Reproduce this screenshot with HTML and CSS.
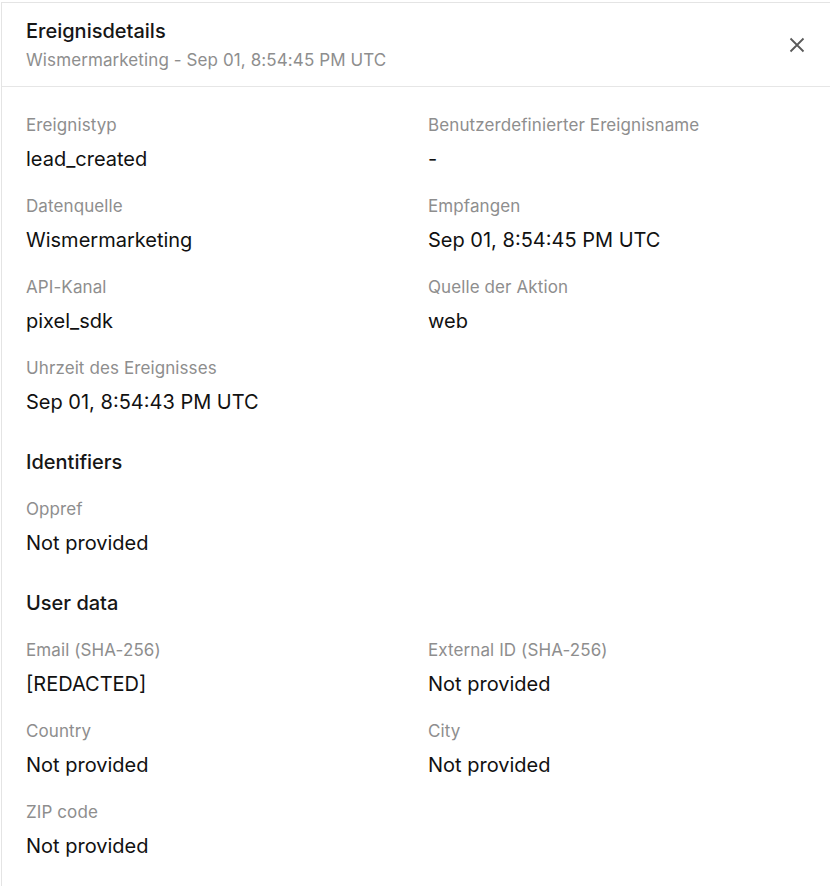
FILE: index.html
```html
<!DOCTYPE html>
<html lang="de">
<head>
<meta charset="utf-8">
<title>Ereignisdetails</title>
<link rel="stylesheet" href="styles.css">
</head>
<body>
<div class="page">
  <div class="backdrop"></div>
  <aside class="panel">
    <header class="panel-header">
      <div class="titles">
        <h1 class="title">Ereignisdetails</h1>
        <div class="subtitle">Wismermarketing - Sep 01, 8:54:45 PM UTC</div>
      </div>
      <button class="close" aria-label="Schließen">
        <svg width="16" height="16" viewBox="0 0 16 16"><path d="M1.5 1.5 L14.5 14.5 M14.5 1.5 L1.5 14.5" stroke="#5a5a5a" stroke-width="1.8" fill="none"/></svg>
      </button>
    </header>
    <div class="panel-body">
      <div class="grid">
        <div class="field"><div class="label">Ereignistyp</div><div class="value">lead_created</div></div>
        <div class="field"><div class="label">Benutzerdefinierter Ereignisname</div><div class="value">-</div></div>
        <div class="field"><div class="label">Datenquelle</div><div class="value">Wismermarketing</div></div>
        <div class="field"><div class="label">Empfangen</div><div class="value">Sep 01, 8:54:45 PM UTC</div></div>
        <div class="field"><div class="label">API-Kanal</div><div class="value">pixel_sdk</div></div>
        <div class="field"><div class="label">Quelle der Aktion</div><div class="value">web</div></div>
        <div class="field"><div class="label">Uhrzeit des Ereignisses</div><div class="value">Sep 01, 8:54:43 PM UTC</div></div>
      </div>
      <h2 class="section">Identifiers</h2>
      <div class="grid">
        <div class="field"><div class="label">Oppref</div><div class="value">Not provided</div></div>
      </div>
      <h2 class="section">User data</h2>
      <div class="grid">
        <div class="field"><div class="label">Email (SHA-256)</div><div class="value">[REDACTED]</div></div>
        <div class="field"><div class="label">External ID (SHA-256)</div><div class="value">Not provided</div></div>
        <div class="field"><div class="label">Country</div><div class="value">Not provided</div></div>
        <div class="field"><div class="label">City</div><div class="value">Not provided</div></div>
        <div class="field"><div class="label">ZIP code</div><div class="value">Not provided</div></div>
      </div>
    </div>
  </aside>
</div>
</body>
</html>
```

FILE: styles.css
```css
* { box-sizing: border-box; }
html, body {
  margin: 0;
  padding: 0;
  background: #ffffff;
}
body {
  font-family: Inter, "Noto Sans", "Liberation Sans", sans-serif;
  color: #111111;
}
.page {
  display: flex;
  width: 830px;
  height: 886px;
  overflow: hidden;
  padding-top: 2px;
}
.backdrop {
  width: 1px;
  flex: none;
  background: #ffffff;
}
.panel {
  flex: 1;
  border-left: 1px solid #e4e4e4;
  border-top: 1px solid #e4e4e4;
  background: #ffffff;
  display: flex;
  flex-direction: column;
}
.panel-header {
  display: flex;
  align-items: center;
  justify-content: space-between;
  padding: 14px 24px 14px 24px;
  border-bottom: 1px solid #e6e6e6;
}
.titles {
  display: flex;
  flex-direction: column;
  gap: 3px;
}
.title {
  margin: 0;
  font-size: 20px;
  line-height: 28px;
  font-weight: 500;
  color: #161616;
}
.subtitle {
  font-size: 17px;
  line-height: 24px;
  letter-spacing: 0.1px;
  color: #8e8e8e;
}
.close {
  border: 0;
  background: transparent;
  padding: 0;
  width: 16px;
  height: 16px;
  margin-right: 1px;
  margin-top: 1px;
  cursor: pointer;
  display: flex;
}
.panel-body {
  padding: 26px 24px 24px 24px;
}
.grid {
  display: grid;
  grid-template-columns: 1fr 1fr;
  column-gap: 24px;
  row-gap: 21px;
}
.field {
  display: flex;
  flex-direction: column;
  gap: 8px;
}
.label {
  font-size: 17px;
  line-height: 24px;
  letter-spacing: 0.1px;
  color: #8e8e8e;
}
.value {
  font-size: 20px;
  line-height: 28px;
  color: #111111;
}
.section {
  margin: 32px 0 21px 0;
  font-size: 20px;
  line-height: 28px;
  font-weight: 500;
  color: #161616;
}
```
